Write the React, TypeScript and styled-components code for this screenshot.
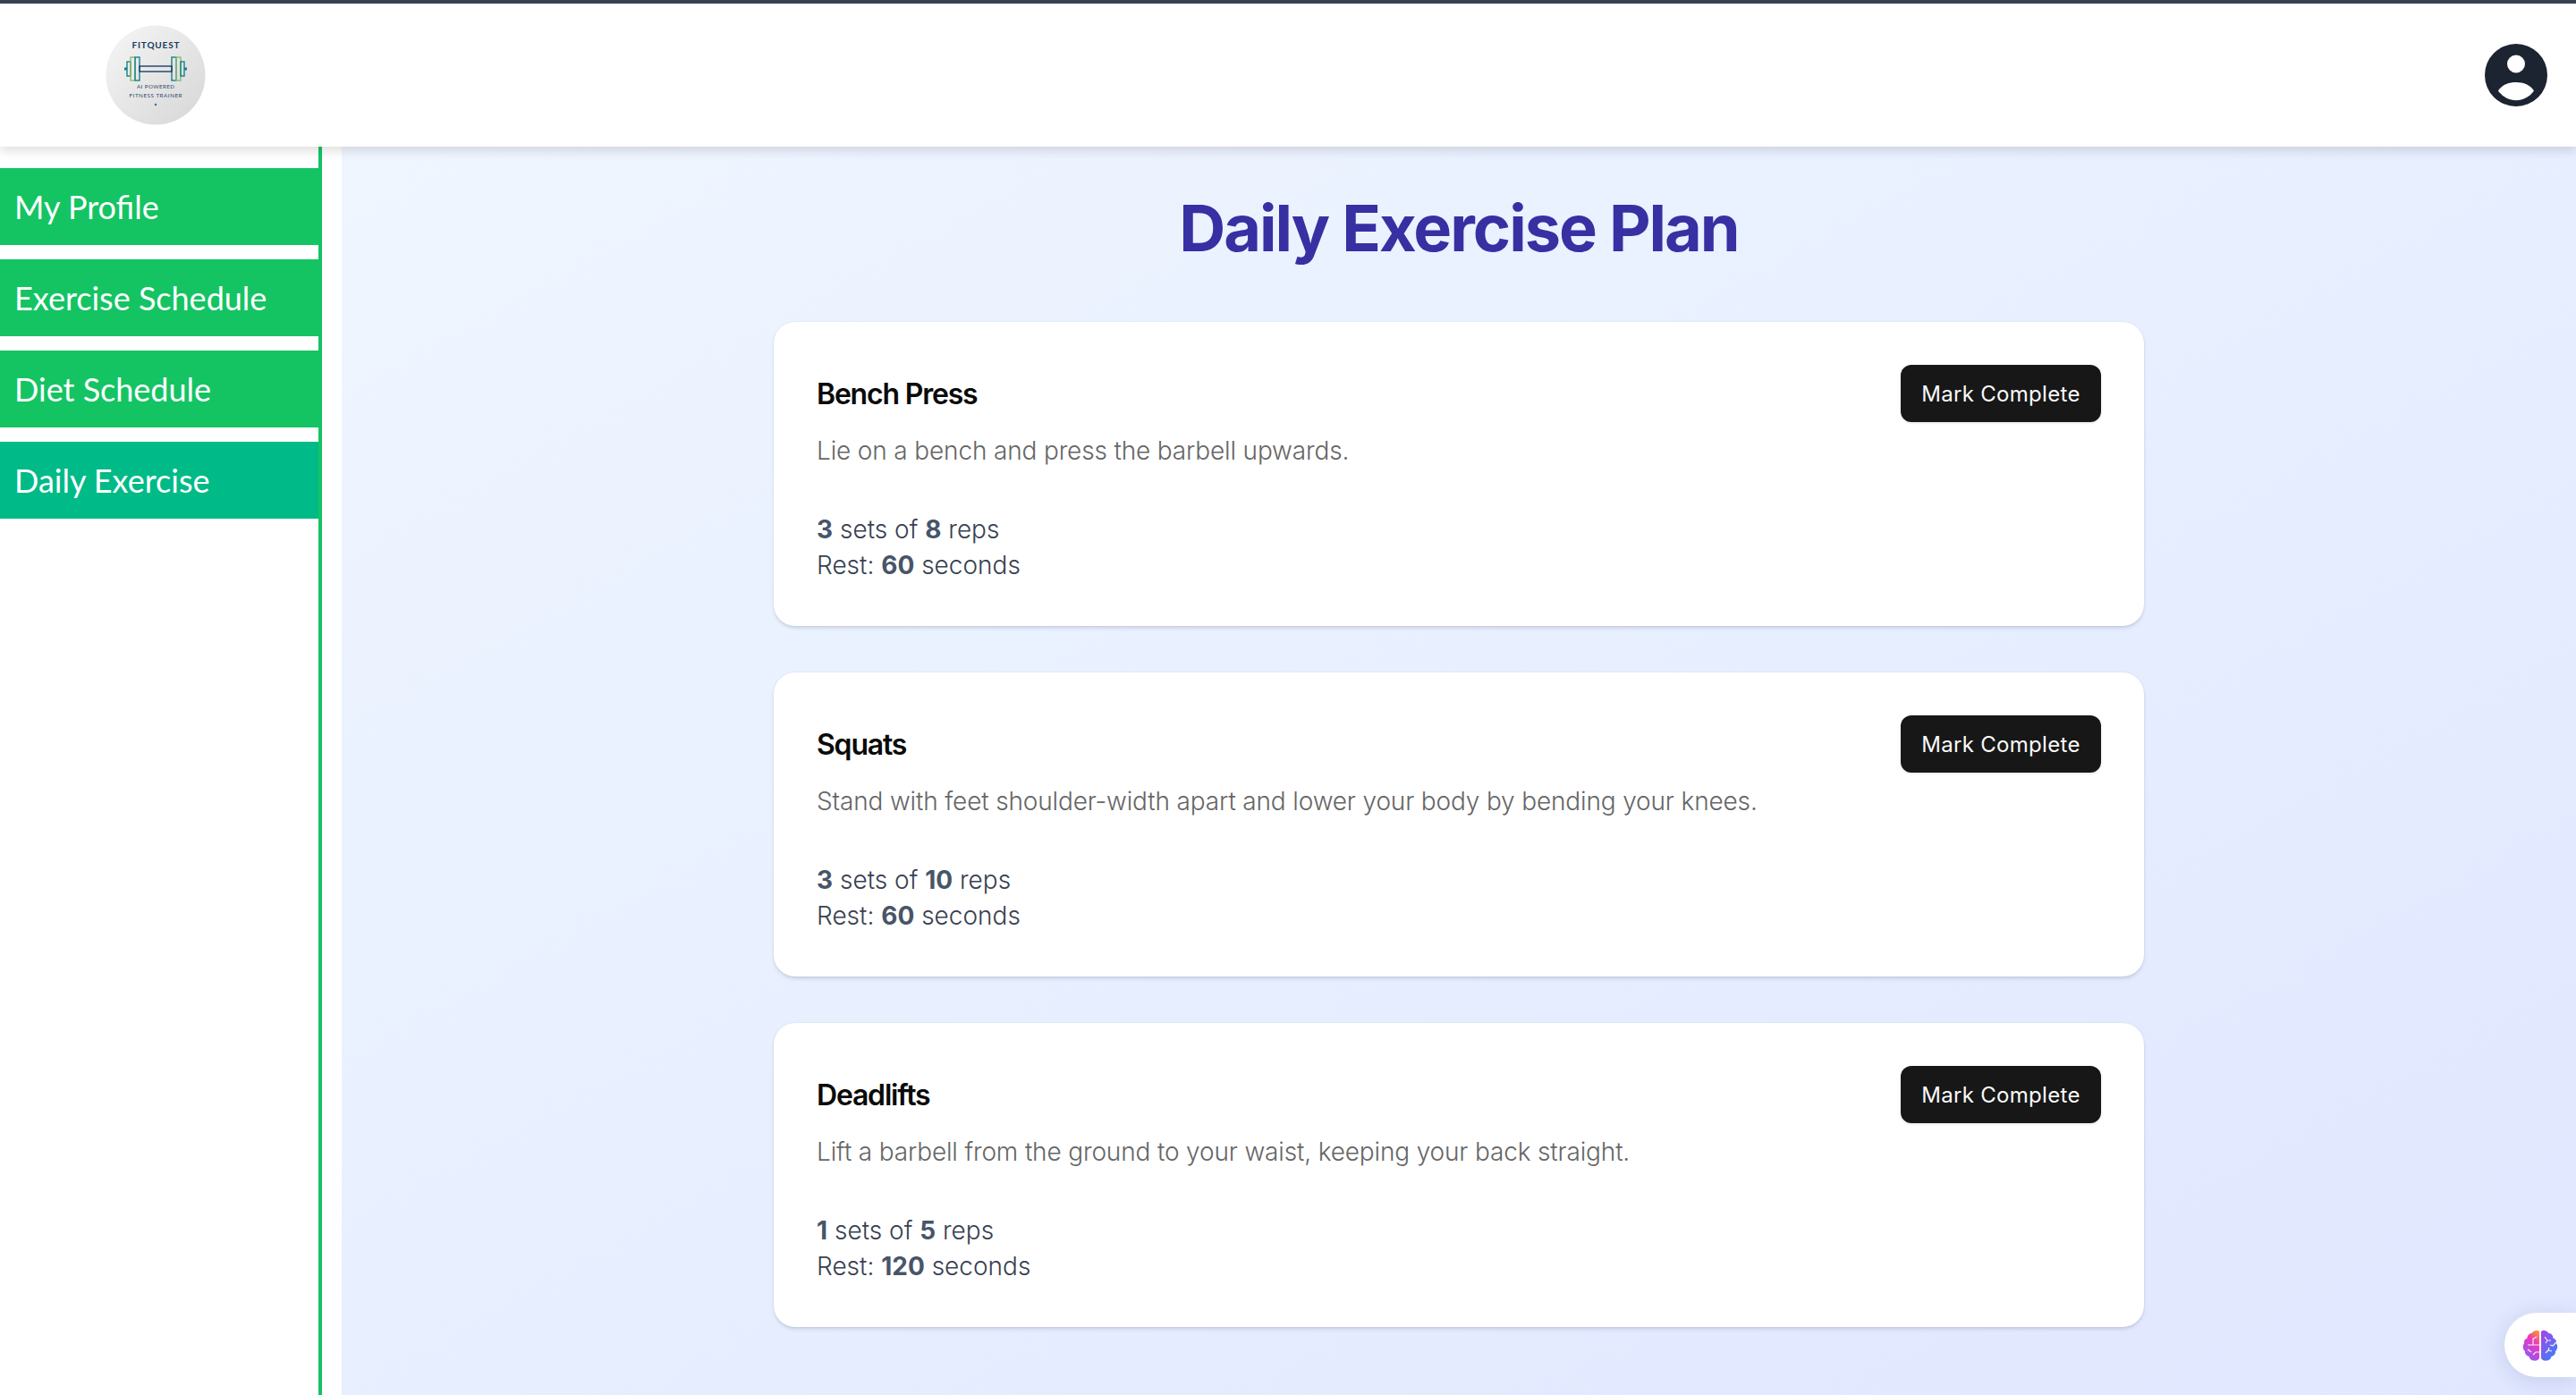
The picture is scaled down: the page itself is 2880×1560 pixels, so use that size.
import styled, { createGlobalStyle } from "styled-components";

const exercises = [
  {
    name: "Bench Press",
    text: "Lie on a bench and press the barbell upwards.",
    sets: 3,
    reps: 8,
    rest: 60,
  },
  {
    name: "Squats",
    text: "Stand with feet shoulder-width apart and lower your body by bending your knees.",
    sets: 3,
    reps: 10,
    rest: 60,
  },
  {
    name: "Deadlifts",
    text: "Lift a barbell from the ground to your waist, keeping your back straight.",
    sets: 1,
    reps: 5,
    rest: 120,
  },
];

const navItems = ["My Profile", "Exercise Schedule", "Diet Schedule", "Daily Exercise"];

export default function App() {
  return (
    <>
      <GlobalStyle />
      <Page>
        <Header>
          <Logo />
          <UserIcon />
        </Header>
        <Body>
          <Sidebar>
            {navItems.map((item) => (
              <NavItem key={item} $active={item === "Daily Exercise"}>
                {item}
              </NavItem>
            ))}
          </Sidebar>
          <Main>
            <Title>Daily Exercise Plan</Title>
            <CardList>
              {exercises.map((elem) => (
                <Card key={elem.name}>
                  <CardTop>
                    <CardName>{elem.name}</CardName>
                    <CompleteButton>Mark Complete</CompleteButton>
                  </CardTop>
                  <Description>{elem.text}</Description>
                  <Stats>
                    <div>
                      <b>{elem.sets}</b> sets of <b>{elem.reps}</b> reps
                    </div>
                    <div>
                      Rest: <b>{elem.rest}</b> seconds
                    </div>
                  </Stats>
                </Card>
              ))}
            </CardList>
          </Main>
        </Body>
        <BrainPill>
          <BrainIcon />
        </BrainPill>
      </Page>
    </>
  );
}

function Logo() {
  return (
    <LogoSvg viewBox="0 0 112 112">
      <defs>
        <linearGradient id="logoBg" x1="0" y1="0" x2="1" y2="1">
          <stop offset="0" stopColor="#f6f6f6" />
          <stop offset="1" stopColor="#d6d6d6" />
        </linearGradient>
      </defs>
      <circle cx="56" cy="56" r="55.5" fill="url(#logoBg)" />
      <text x="56" y="26" textAnchor="middle" textLength="53" fontSize="10" fontWeight="700" fill="#17375e" fontFamily="Lato, sans-serif">
        FITQUEST
      </text>
      <g fill="none" strokeWidth="1.4">
        <path d="M21 49h3M88 49h3" stroke="#0f7f86" strokeWidth="3" />
        <rect x="24" y="41" width="4" height="16" stroke="#13838c" />
        <rect x="28" y="36" width="5" height="26" stroke="#8dbb70" />
        <rect x="33" y="36" width="5" height="26" stroke="#13838c" />
        <rect x="74" y="36" width="5" height="26" stroke="#13838c" />
        <rect x="79" y="36" width="5" height="26" stroke="#8dbb70" />
        <rect x="84" y="41" width="4" height="16" stroke="#13838c" />
        <rect x="38" y="46" width="36" height="6" stroke="#1d3f6b" />
      </g>
      <text x="56" y="70.500" textAnchor="middle" textLength="42" fontSize="6.2" fill="#2c4a6e" fontFamily="Lato, sans-serif">
        AI POWERED
      </text>
      <text x="56" y="81" textAnchor="middle" textLength="59" fontSize="6.2" fill="#2c4a6e" fontFamily="Lato, sans-serif">
        FITNESS TRAINER
      </text>
      <circle cx="56" cy="89" r="1.2" fill="#0f7f86" />
    </LogoSvg>
  );
}

function UserIcon() {
  return (
    <UserSvg viewBox="0 0 70 70">
      <path
        fill="#1c2331"
        fillRule="evenodd"
        d="M35 0a35 35 0 1 1 0 70a35 35 0 1 1 0-70ZM35 12.500a10 10 0 1 0 0 20a10 10 0 1 0 0-20ZM15 52.500c4.500 6.600 12 10.800 20 10.800s15.500-4.200 20-10.800c-4-6.400-11.500-9.500-20-9.500s-16 3.100-20 9.500Z"
      />
    </UserSvg>
  );
}

function BrainIcon() {
  return (
    <BrainSvg viewBox="0 0 40 36">
      <defs>
        <linearGradient id="brainLeft" x1="0.8" y1="0" x2="0.3" y2="1">
          <stop offset="0" stopColor="#fb923c" />
          <stop offset="0.35" stopColor="#ec38bc" />
          <stop offset="1" stopColor="#8b5cf6" />
        </linearGradient>
        <linearGradient id="brainRight" x1="0.1" y1="0" x2="0.8" y2="1">
          <stop offset="0" stopColor="#a645e8" />
          <stop offset="1" stopColor="#3b82f6" />
        </linearGradient>
      </defs>
      <path
        fill="url(#brainLeft)"
        d="M19 3v30c-1 2-4 3-6 2.500c-3 0-5-2-5.500-4.500C4 30 2.500 27.500 3 25c-2.500-2-3-6-1-8.500C1.500 13.500 3 11 5.500 10.500C5.500 7 8 5 10.500 5C12 2 17 .5 19 3Z"
      />
      <path
        fill="url(#brainRight)"
        d="M21 3v30c1 2 4 3 6 2.500c3 0 5-2 5.500-4.500c3.500-1 5-3.500 4.500-6c2.500-2 3-6 1-8.500c.5-3-1-5.500-3.500-6C34.500 7 32 5 29.500 5C28 2 23 .5 21 3Z"
      />
      <g fill="none" stroke="#fff" strokeWidth="1.200" opacity="0.9">
        <path d="M19 18H6M12 18v-7l4-2M19 26h-4l-3 3M6 23l4 3" />
        <path d="M25 9l3 4h4M28 13l-2 3M38 15l-4 4l-3-1M26 27l3-3l4 1M29 24l1-3" />
      </g>
    </BrainSvg>
  );
}

const GlobalStyle = createGlobalStyle`
  html,
  body {
    margin: 0;
    padding: 0;
    height: 100%;
    background: #ffffff;
    overflow: hidden;
  }

  * {
    box-sizing: border-box;
  }
`;

const Page = styled.div`
  height: 1560px;
  display: flex;
  flex-direction: column;
  position: relative;
  font-family: Inter, "Liberation Sans", sans-serif;
  overflow: hidden;
`;

const Header = styled.header`
  height: 164px;
  flex-shrink: 0;
  display: flex;
  align-items: center;
  justify-content: space-between;
  padding: 0 32px 6px 118px;
  background: #ffffff;
  border-top: 4px solid #374151;
  box-shadow: 0 4px 12px rgba(0, 0, 0, 0.14);
  position: relative;
  z-index: 2;
`;

const LogoSvg = styled.svg`
  width: 112px;
  height: 112px;
  margin-top: 6px;
  display: block;
`;

const UserSvg = styled.svg`
  width: 70px;
  height: 70px;
  margin-top: 6px;
  display: block;
`;

const Body = styled.div`
  flex: 1;
  display: flex;
  min-height: 0;
`;

const Sidebar = styled.nav`
  width: 360px;
  flex-shrink: 0;
  display: flex;
  flex-direction: column;
  gap: 16px;
  padding-top: 24px;
  background: #ffffff;
  border-right: 4px solid #14c463;
`;

const NavItem = styled.div<{ $active: boolean }>`
  height: 86px;
  display: flex;
  align-items: center;
  padding-left: 16px;
  font-family: Lato, sans-serif;
  font-size: 36px;
  font-weight: 400;
  color: #ffffff;
  background: ${({ $active }) => ($active ? "#00ba88" : "#14c463")};
`;

const Main = styled.main`
  flex: 1;
  margin-left: 22px;
  padding-top: 52px;
  display: flex;
  flex-direction: column;
  align-items: center;
  background: linear-gradient(to bottom right, #eff6ff, #e0e7ff);
`;

const Title = styled.h1`
  margin: 0 0 66px;
  font-size: 72px;
  line-height: 78px;
  font-weight: 700;
  letter-spacing: -2px;
  color: #3730a3;
`;

const CardList = styled.div`
  width: 1532px;
  display: flex;
  flex-direction: column;
  gap: 52px;
`;

const Card = styled.section`
  height: 340px;
  padding: 48px;
  background: #ffffff;
  border-radius: 24px;
  box-shadow: 0 3px 4px -1px rgba(100, 116, 139, 0.28), 0 0 2px rgba(100, 116, 139, 0.16);
`;

const CardTop = styled.div`
  display: flex;
  align-items: center;
  justify-content: space-between;
`;

const CardName = styled.h2`
  margin: 0;
  font-size: 32px;
  font-weight: 600;
  letter-spacing: -1.200px;
  color: #0a0a0a;
`;

const CompleteButton = styled.button`
  width: 224px;
  height: 64px;
  padding: 0;
  border: none;
  border-radius: 12px;
  background: #171717;
  color: #fafafa;
  font-family: inherit;
  font-size: 24px;
  font-weight: 400;
  letter-spacing: 0.300px;
  box-shadow: 0 1px 3px rgba(0, 0, 0, 0.12);
`;

const Description = styled.p`
  margin: 12px 0 0;
  font-size: 28px;
  font-weight: 300;
  line-height: 40px;
  letter-spacing: -0.150px;
  color: #666666;
`;

const Stats = styled.div`
  margin-top: 48px;
  font-size: 28px;
  font-weight: 300;
  line-height: 40px;
  color: #374151;

  b {
    font-weight: 700;
    color: #475569;
  }
`;

const BrainPill = styled.div`
  position: absolute;
  right: 0;
  top: 1468px;
  width: 80px;
  height: 72px;
  display: flex;
  align-items: center;
  padding-left: 20px;
  background: #ffffff;
  border-radius: 36px 0 0 36px;
  box-shadow: 0 4px 24px rgba(60, 70, 130, 0.16);
`;

const BrainSvg = styled.svg`
  width: 40px;
  height: 36px;
  display: block;
`;
